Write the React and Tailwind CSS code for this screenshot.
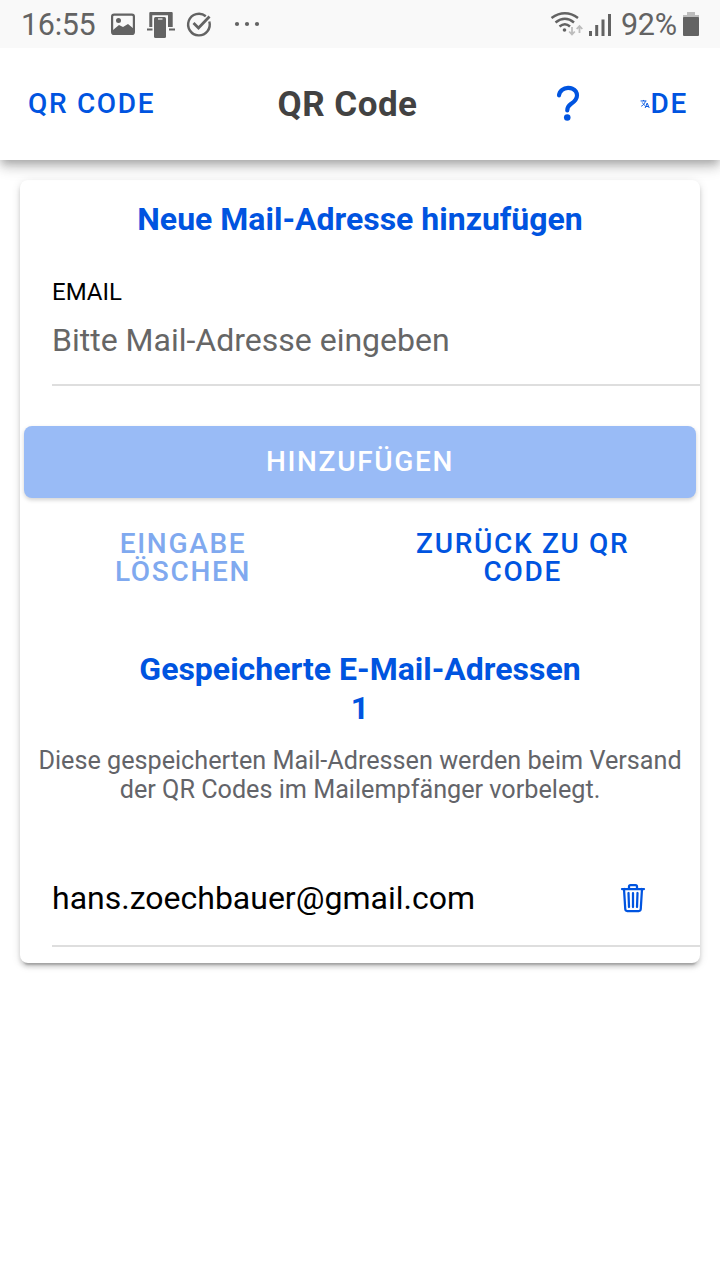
import React from "react";

function StatusBar() {
  return (
    <div className="relative z-10 flex h-12 items-center bg-[#f9f9f9] text-[#636363]">
      <span className="ml-[21px] w-[90px] pt-[2px] text-[30.5px] leading-[46px] tracking-[-0.3px]">16:55</span>
      <svg className="h-12 w-[154px]" viewBox="111 0 154 48" fill="none">
        <rect x="112.1" y="14.6" width="21.8" height="19.3" rx="2" stroke="#636363" strokeWidth="2.2" />
        <circle cx="118.5" cy="20.5" r="2.5" fill="#636363" />
        <path d="M113 30l6-5 4 2 5-3 6 5v5h-21z" fill="#636363" />
        <path d="M149.3 27V13q0-1 1-1h21.4q1 0 1 1v14h-4.700V15.200H152.300V27z" fill="#636363" />
        <path d="M147 29.500h5.500M169 29.500h6" stroke="#636363" strokeWidth="2.2" />
        <rect x="154" y="17" width="12" height="21" rx="1.5" fill="#636363" />
        <path d="M158 19h4.500" stroke="#f9f9f9" strokeWidth="1.2" />
        <path d="M209.300 21.500a10.800 10.800 0 1 1-3.500-5.300" stroke="#636363" strokeWidth="2.4" />
        <path d="M193.500 23l5 5L209.500 16.500" stroke="#636363" strokeWidth="2.8" />
        <g fill="#636363"><circle cx="237" cy="24" r="2.1" /><circle cx="247" cy="24" r="2.1" /><circle cx="257" cy="24" r="2.1" /></g>
      </svg>
      <svg className="ml-auto h-12 w-[65px]" viewBox="550 0 65 48" fill="none">
        <g stroke="#636363" strokeWidth="2.5">
          <path d="M551.500 18Q565 8.500 578 18" />
          <path d="M555.500 22.500Q565 15 574 22.500" />
          <path d="M559.500 26.500Q565 22 570 26.500" />
        </g>
        <circle cx="564.5" cy="30" r="1.8" fill="#636363" />
        <path d="M572 27v7M569.200 31.500l2.800 3 2.800-3M579.500 33v-7M576.700 29l2.800-3 2.800 3" stroke="#bdbdbd" strokeWidth="1.8" />
        <path d="M590.500 31v5M596.700 25v11M603 19.500v16.500M609.500 14v22" stroke="#636363" strokeWidth="3" />
      </svg>
      <span className="ml-[6px] w-[62px] pt-[2px] text-[30.5px] leading-[46px] tracking-[-0.3px]">92%</span>
      <svg className="mr-[20px] h-12 w-[17px]" viewBox="683 0 17 48">
        <path d="M687 12h8v3h4v3h-16v-3h4z" fill="#bdbdbd" />
        <rect x="683" y="17" width="16" height="19" rx="1" fill="#636363" />
      </svg>
    </div>
  );
}

function Header() {
  return (
    <header className="relative flex h-28 items-center bg-white font-medium text-[#0054e0] shadow-[0_4px_8px_-2px_rgba(0,0,0,0.2),0_8px_10px_0_rgba(0,0,0,0.14),0_2px_20px_0_rgba(0,0,0,0.12)]">
      <button className="ml-7 w-[249.5px] text-left text-[28px] tracking-[1.68px]">QR CODE</button>
      <h1 className="w-[266.5px] pt-[2px] text-[35px] tracking-[0.5px] font-bold text-[#424242]">QR Code</h1>
      <svg className="h-12 w-12 shrink-0" viewBox="0 0 512 512" fill="none">
        <path d="M160 164s1.440-33 33.540-59.460C212.600 88.830 235.490 84.280 256 84c18.730-.23 35.470 2.940 45.480 7.820C318.590 100.200 352 120.600 352 164c0 45.670-29.900 66.370-62.350 89.180S248 298.360 248 324" stroke="currentColor" strokeWidth="44" strokeLinecap="round" />
        <circle cx="248" cy="400" r="35" fill="currentColor" />
      </svg>
      <button className="ml-[48px] flex items-center text-[28px] tracking-[1.68px]">
        <svg className="h-[10px] w-[10px]" viewBox="0 0 512 512" fill="none" stroke="currentColor" strokeWidth="50">
          <path d="M30 100h300M180 50v50M262 460l105-250 105 250M290 384h150M275 100S257 206 189 277 60 370 60 370M256 336s-45-27-82-75-56-85-56-85" />
        </svg>
        <span className="ml-[0.5px]">DE</span>
      </button>
    </header>
  );
}

export default function App() {
  return (
    <div className="h-[1280px] w-[720px] overflow-hidden bg-white font-['Roboto',sans-serif]">
      <StatusBar />
      <Header />
      <main className="mx-5 mt-5 h-[783px] rounded-lg bg-white shadow-[0_6px_2px_-4px_rgba(0,0,0,0.2),0_4px_4px_0_rgba(0,0,0,0.14),0_2px_10px_0_rgba(0,0,0,0.12)]">
        <h2 className="pt-5 text-center text-[32px] leading-[38px] font-bold text-[#0054e0]">Neue Mail-Adresse hinzufügen</h2>
        <div className="mt-[38px] ml-8 h-[110px] border-b-2 border-[#dedede]">
          <label className="block pt-[2px] text-[24px] leading-7 text-black">EMAIL</label>
          <div className="mt-[15px] text-[32px] leading-[38px] text-[#666]">Bitte Mail-Adresse eingeben</div>
        </div>
        <button className="mx-1 mt-10 block h-[72px] w-[672px] rounded-lg bg-[#99bbf6] text-[28px] font-medium tracking-[1.68px] text-white shadow-[0_2px_4px_rgba(0,0,0,0.18)]">HINZUFÜGEN</button>
        <div className="mt-8 grid h-14 grid-cols-2 text-center text-[28px] leading-7 font-medium tracking-[1.68px] text-[#0054e0]">
          <button className="mr-[14px] text-[#80a9ef]">EINGABE<br />LÖSCHEN</button>
          <button className="mr-[14.5px]">ZURÜCK ZU QR<br />CODE</button>
        </div>
        <h2 className="mt-16 text-center text-[32px] leading-[39px] font-bold text-[#0054e0]">Gespeicherte E-Mail-Adressen<br />1</h2>
        <p className="mt-[18px] text-center text-[25.2px] leading-[29px] whitespace-nowrap text-[#636469]">Diese gespeicherten Mail-Adressen werden beim Versand<br />der QR Codes im Mailempfänger vorbelegt.</p>
        <div className="mt-[47px] ml-8 flex h-[96px] items-center justify-between border-b-2 border-[#dedede] pr-[51px]">
          <span className="text-[32px] leading-[38px] text-black">hans.zoechbauer@gmail.com</span>
          <svg className="h-8 w-8" viewBox="0 0 512 512" fill="none" stroke="#0054e0" strokeWidth="36" strokeLinecap="round" strokeLinejoin="round">
            <path d="M112 112l20 320c.950 18.490 14.400 32 32 32h184c17.670 0 30.870-13.510 32-32l20-320M80 112h352M192 112V72a24 24 0 0 1 24-24h80a24 24 0 0 1 24 24v40M256 176v224M184 176l8 224M328 176l-8 224" />
          </svg>
        </div>
      </main>
    </div>
  );
}
